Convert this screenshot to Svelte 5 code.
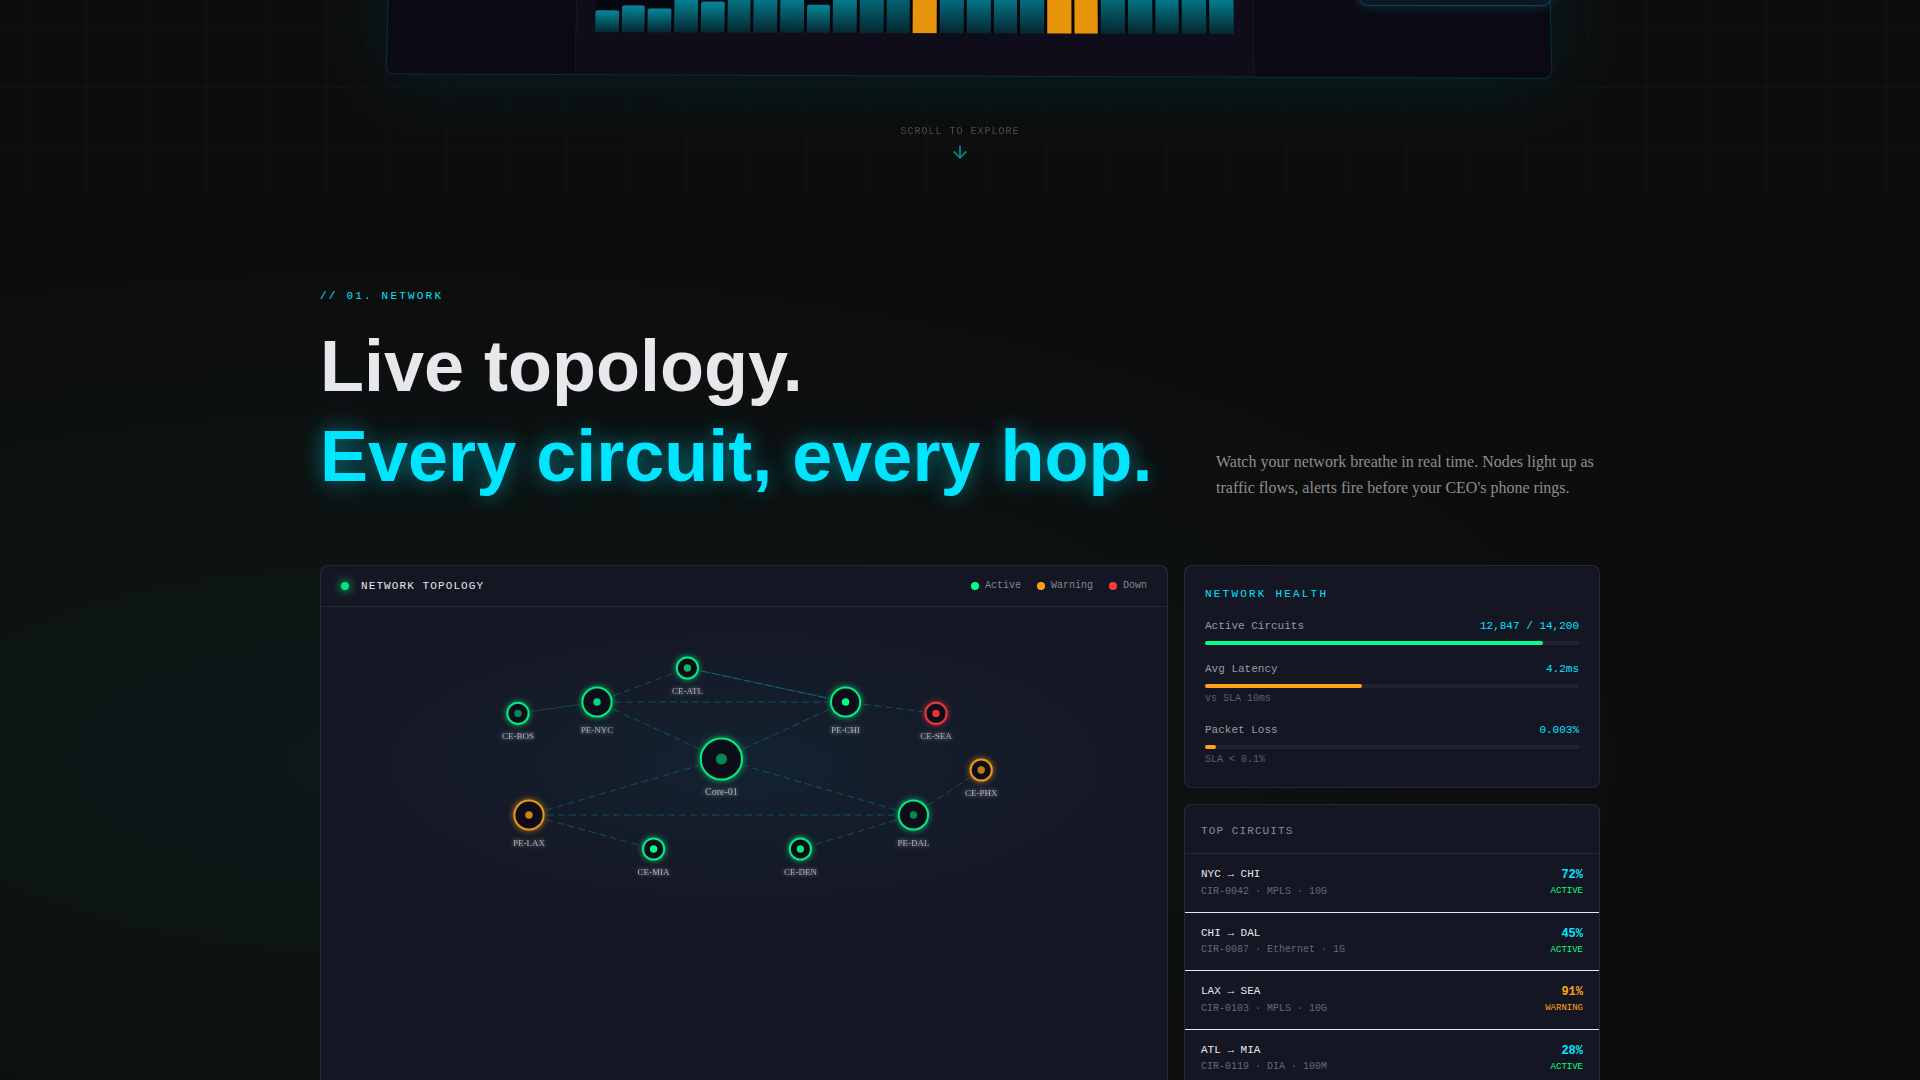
<script lang="ts">
  type Status = 'active' | 'warning' | 'down';

  const bars = [22, 27, 24, 35, 31, 42, 40, 38, 28, 37, 50, 54, 90, 48, 42, 42, 46, 98, 94, 50, 44, 40, 44, 38];
  const hot = [12, 17, 18];

  const legend: { label: string; status: Status }[] = [
    { label: 'Active', status: 'active' },
    { label: 'Warning', status: 'warning' },
    { label: 'Down', status: 'down' },
  ];

  type Node = { id: string; x: number; y: number; r: number; status: Status; pulse: number };
  const nodes: Node[] = [
    { id: 'Core-01', x: 400.4, y: 152, r: 21, status: 'active', pulse: 0.5 },
    { id: 'PE-NYC', x: 276, y: 95, r: 15, status: 'active', pulse: 0.85 },
    { id: 'PE-CHI', x: 524.6, y: 95, r: 15, status: 'active', pulse: 1 },
    { id: 'PE-LAX', x: 208, y: 208, r: 15, status: 'warning', pulse: 0.8 },
    { id: 'PE-DAL', x: 592.4, y: 208, r: 15, status: 'active', pulse: 0.5 },
    { id: 'CE-BOS', x: 197, y: 106.4, r: 11, status: 'active', pulse: 0.5 },
    { id: 'CE-ATL', x: 366.4, y: 61, r: 11, status: 'active', pulse: 0.7 },
    { id: 'CE-SEA', x: 615, y: 106.4, r: 11, status: 'down', pulse: 0.9 },
    { id: 'CE-PHX', x: 660.2, y: 163, r: 11, status: 'warning', pulse: 0.75 },
    { id: 'CE-MIA', x: 332.6, y: 242, r: 11, status: 'active', pulse: 1 },
    { id: 'CE-DEN', x: 479.4, y: 242, r: 11, status: 'active', pulse: 0.9 },
  ];

  const links: [string, string][] = [
    ['PE-NYC', 'CE-ATL'],
    ['PE-NYC', 'PE-CHI'],
    ['PE-NYC', 'Core-01'],
    ['PE-CHI', 'Core-01'],
    ['PE-CHI', 'CE-SEA'],
    ['CE-ATL', 'PE-CHI'],
    ['PE-LAX', 'Core-01'],
    ['PE-DAL', 'Core-01'],
    ['PE-LAX', 'PE-DAL'],
    ['PE-LAX', 'CE-MIA'],
    ['PE-DAL', 'CE-DEN'],
    ['PE-DAL', 'CE-PHX'],
  ];
  const flows: [string, string][] = [
    ['CE-BOS', 'PE-NYC'],
    ['CE-ATL', 'PE-CHI'],
  ];

  // trim both ends so a link stops short of the node rings
  function segment([a, b]: [string, string]) {
    const from = nodes.find((n) => n.id === a)!;
    const to = nodes.find((n) => n.id === b)!;
    const len = Math.hypot(to.x - from.x, to.y - from.y);
    const ux = (to.x - from.x) / len;
    const uy = (to.y - from.y) / len;
    return {
      x1: from.x + ux * (from.r + 3),
      y1: from.y + uy * (from.r + 3),
      x2: to.x - ux * (to.r + 3),
      y2: to.y - uy * (to.r + 3),
    };
  }

  const health = [
    { label: 'Active Circuits', value: '12,847 / 14,200', pct: 90.5, status: 'active', note: '' },
    { label: 'Avg Latency', value: '4.2ms', pct: 42, status: 'warning', note: 'vs SLA 10ms' },
    { label: 'Packet Loss', value: '0.003%', pct: 3, status: 'warning', note: 'SLA < 0.1%' },
  ];

  const circuits = [
    { route: 'NYC → CHI', meta: 'CIR-0042 · MPLS · 10G', load: 72, status: 'active' },
    { route: 'CHI → DAL', meta: 'CIR-0087 · Ethernet · 1G', load: 45, status: 'active' },
    { route: 'LAX → SEA', meta: 'CIR-0103 · MPLS · 10G', load: 91, status: 'warning' },
    { route: 'ATL → MIA', meta: 'CIR-0119 · DIA · 100M', load: 28, status: 'active' },
  ];
</script>

<main>
  <section class="hero">
    <div class="console">
      <div class="pane"></div>
      <div class="pane chart">
        <div class="bars">
          {#each bars as h, i}
            <span class="bar" class:hot={hot.includes(i)} style="height: {h}px"></span>
          {/each}
        </div>
      </div>
      <div class="pane"></div>
      <div class="float-card"></div>
    </div>
    <a class="cue" href="#network">
      <span>SCROLL TO EXPLORE</span>
      <svg width="20" height="20" viewBox="0 0 24 24" fill="none" stroke="currentColor" stroke-width="2.4" stroke-linecap="round" stroke-linejoin="round" aria-hidden="true">
        <path d="M12 5v14M19 12l-7 7-7-7" />
      </svg>
    </a>
  </section>

  <section class="network" id="network">
    <div class="container">
      <header class="intro">
        <div>
          <p class="eyebrow">// 01. NETWORK</p>
          <h2>Live topology.<br /><span class="glow">Every circuit, every hop.</span></h2>
        </div>
        <p class="lead">Watch your network breathe in real time. Nodes light up as traffic flows, alerts fire before your CEO's phone rings.</p>
      </header>

      <div class="grid">
        <article class="card topology">
          <div class="card-head">
            <h3><span class="dot active live"></span>NETWORK TOPOLOGY</h3>
            <ul class="legend">
              {#each legend as item}
                <li><span class="dot {item.status}"></span>{item.label}</li>
              {/each}
            </ul>
          </div>
          <svg class="map" viewBox="0 0 846 316" role="img" aria-label="Network topology map">
            {#each links as link}
              <line class="link" {...segment(link)} />
            {/each}
            {#each flows as link}
              <line class="flow" {...segment(link)} />
            {/each}
            {#each nodes as n}
              <g class="node {n.status}">
                <circle class="ring" cx={n.x} cy={n.y} r={n.r - 0.4} />
                <circle class="core" cx={n.x} cy={n.y} r={n.r > 20 ? 5.6 : 3.7} opacity={n.pulse} />
              </g>
              <text class="name" class:big={n.r > 20} x={n.x} y={n.y + n.r + (n.r > 11 && n.r < 20 ? 16 : 15)}>{n.id}</text>
            {/each}
          </svg>
        </article>

        <div class="side">
          <article class="card health">
            <h3>NETWORK HEALTH</h3>
            {#each health as m}
              <div class="metric">
                <div class="metric-row"><span>{m.label}</span><span class="value">{m.value}</span></div>
                <div class="track"><div class="fill {m.status}" style="width: {m.pct}%"></div></div>
                {#if m.note}<p class="note">{m.note}</p>{/if}
              </div>
            {/each}
          </article>

          <article class="card circuits">
            <h3>TOP CIRCUITS</h3>
            <ul>
              {#each circuits as c}
                <li>
                  <div>
                    <p class="route">{c.route}</p>
                    <p class="meta">{c.meta}</p>
                  </div>
                  <div class="load {c.status}">
                    <p class="pct">{c.load}%</p>
                    <p class="state">{c.status.toUpperCase()}</p>
                  </div>
                </li>
              {/each}
            </ul>
          </article>
        </div>
      </div>
    </div>
  </section>
</main>

<style>
  :global(body) { background: #0d0d0d; }
  main {
    --cyan: #00e5ff;
    --green: #00ff88;
    --orange: #ffa216;
    --red: #ff3b3b;
    --text: #e8e8ec;
    --line: rgba(255, 255, 255, 0.08);
    --mono: 'Liberation Mono', 'Courier New', monospace;
    color: var(--text);
    font-family: 'Liberation Serif', 'Times New Roman', serif;
    line-height: 1.6;
    overflow: hidden;
    background: radial-gradient(ellipse 1420px 560px at 20% 760px, rgba(0, 229, 220, 0.05), transparent 90%);
  }
  p, h2, h3, ul { margin: 0; padding: 0; }
  ul { list-style: none; }
  h3 { font-weight: 400; }

  .active { --tone: var(--green); }
  .warning { --tone: var(--orange); }
  .down { --tone: var(--red); }

  /* hero */
  .hero {
    height: 192px;
    overflow: hidden;
    display: flex;
    flex-direction: column;
    justify-content: flex-end;
    align-items: center;
    background-image:
      linear-gradient(rgba(0, 229, 255, 0.035) 1px, transparent 1px),
      linear-gradient(90deg, rgba(0, 229, 255, 0.035) 1px, transparent 1px);
    background-size: 60px 60px;
    background-position: 26px 27px;
  }
  .console {
    position: relative;
    flex: none;
    display: grid;
    grid-template-columns: 192px 1fr 288px;
    width: min(1160px, 92%);
    height: 280px;
    box-sizing: border-box;
    border: 1px solid rgba(0, 229, 255, 0.16);
    border-radius: 8px;
    background: #0b0a14;
    box-shadow: 0 0 80px rgba(0, 229, 255, 0.08), 0 24px 60px rgba(0, 20, 20, 0.5);
    transform: perspective(1500px) rotateY(-2.4deg) rotateX(4deg);
  }
  .chart {
    display: flex;
    align-items: flex-end;
    padding: 0 19px 42px;
    background: #0f0d19;
    border: solid rgba(255, 255, 255, 0.04);
    border-width: 0 1px;
  }
  .bars {
    flex: 1;
    display: flex;
    align-items: flex-end;
    gap: 3px;
    background: #07080f;
  }
  .bar {
    flex: 1;
    border-radius: 2px 2px 0 0;
    background: linear-gradient(rgba(0, 229, 255, 0.58), rgba(0, 229, 255, 0.14));
  }
  .bar.hot { background: #e8930c; }
  .float-card {
    position: absolute;
    right: -1px;
    bottom: 70px;
    width: 184px;
    height: 100px;
    border: 1px solid rgba(0, 229, 255, 0.25);
    border-radius: 8px;
    background: #0c1722;
    box-shadow: 0 0 12px rgba(0, 229, 255, 0.2);
  }
  .cue {
    display: flex;
    flex-direction: column;
    align-items: center;
    gap: 2px;
    margin-top: 48px;
    padding-bottom: 30px;
    color: #4b4b4d;
    font: 10px/16px var(--mono);
    letter-spacing: 0.1em;
    text-decoration: none;
    position: relative;
  }
  .cue svg { color: rgba(0, 229, 255, 0.5); }

  /* network */
  .network { padding: 96px 40px; }
  .container { max-width: 1280px; margin: 0 auto; }
  .intro {
    display: flex;
    justify-content: space-between;
    align-items: flex-end;
    gap: 48px;
    margin-bottom: 64px;
  }
  .eyebrow {
    margin-bottom: 16px;
    color: var(--cyan);
    font: 11px/17px var(--mono);
    letter-spacing: 0.2em;
  }
  h2 {
    font: 700 72px/90px 'Liberation Sans', Arial, sans-serif;
  }
  .glow {
    color: var(--cyan);
    text-shadow: 0 0 20px rgba(0, 229, 255, 0.4), 0 0 40px rgba(0, 229, 255, 0.2);
  }
  .lead {
    flex: 0 1 384px;
    color: #8d8d90;
    font-size: 16px;
    line-height: 26px;
  }

  .grid {
    display: grid;
    grid-template-columns: repeat(3, 1fr);
    gap: 16px;
  }
  .card {
    border: 1px solid var(--line);
    border-radius: 8px;
    background: #151623;
    overflow: hidden;
    font-family: var(--mono);
  }
  .card h3 { font-size: 11px; }
  .topology { grid-column: span 2; }
  .side { display: flex; flex-direction: column; gap: 16px; }

  .card-head {
    display: flex;
    justify-content: space-between;
    align-items: center;
    padding: 12px 20px;
    border-bottom: 1px solid var(--line);
  }
  .card-head h3 {
    display: flex;
    align-items: center;
    gap: 12px;
    line-height: 16px;
    letter-spacing: 0.1em;
  }
  .dot {
    width: 8px;
    height: 8px;
    border-radius: 50%;
    background: var(--tone);
  }
  .dot.live { background: #00e87c; box-shadow: 0 0 10px 1px rgba(0, 255, 136, 0.7); }
  .legend { display: flex; gap: 16px; }
  .legend li {
    display: flex;
    align-items: center;
    gap: 6px;
    color: #85858c;
    font-size: 10px;
    line-height: 16px;
  }

  .map {
    display: block;
    width: 100%;
    background: radial-gradient(ellipse at center, rgba(0, 229, 255, 0.06), transparent 70%);
  }
  .link {
    stroke: rgba(0, 229, 255, 0.26);
    stroke-dasharray: 7 4;
  }
  .flow { stroke: rgba(0, 229, 255, 0.22); }
  .node { filter: drop-shadow(0 0 3px color-mix(in srgb, var(--tone) 70%, transparent)); }
  .ring {
    fill: #0d0d1a;
    stroke: var(--tone);
    stroke-width: 2;
    stroke-opacity: 0.9;
  }
  .core { fill: var(--tone); }
  .name {
    fill: #a8aab3;
    font: 9px 'Liberation Serif', 'Times New Roman', serif;
    text-anchor: middle;
    filter: drop-shadow(0 0 2px rgba(220, 225, 240, 0.7));
  }
  .name.big { font-size: 10px; }

  .health { padding: 20px; }
  .health h3 {
    margin-bottom: 15px;
    color: var(--cyan);
    line-height: 17px;
    letter-spacing: 0.2em;
  }
  .metric + .metric { margin-top: 16px; }
  .metric-row {
    display: flex;
    justify-content: space-between;
    margin-bottom: 6px;
    color: #9a9aa0;
    font-size: 11px;
    line-height: 17px;
  }
  .value { color: var(--cyan); }
  .track {
    height: 4px;
    border-radius: 2px;
    background: #22232f;
  }
  .fill {
    height: 100%;
    border-radius: 2px;
    background: var(--tone);
  }
  .note {
    margin-top: 4px;
    color: #5e5f69;
    font-size: 10px;
    line-height: 14px;
  }

  .circuits h3 {
    padding: 18px 16px 13px;
    border-bottom: 1px solid var(--line);
    color: #8b8b92;
    line-height: 17px;
    letter-spacing: 0.1em;
  }
  .circuits li {
    display: flex;
    justify-content: space-between;
    align-items: flex-start;
    padding: 12px 16px;
    border-bottom: 1px solid var(--text);
  }
  .route { font-size: 11px; }
  .meta { color: #666771; font-size: 10px; }
  .load { text-align: right; }
  .pct {
    color: var(--cyan);
    font-size: 12px;
    font-weight: 700;
    line-height: 18px;
  }
  .load.warning .pct { color: var(--orange); }
  .state {
    color: var(--tone);
    font-size: 9px;
    line-height: 14px;
  }
</style>
